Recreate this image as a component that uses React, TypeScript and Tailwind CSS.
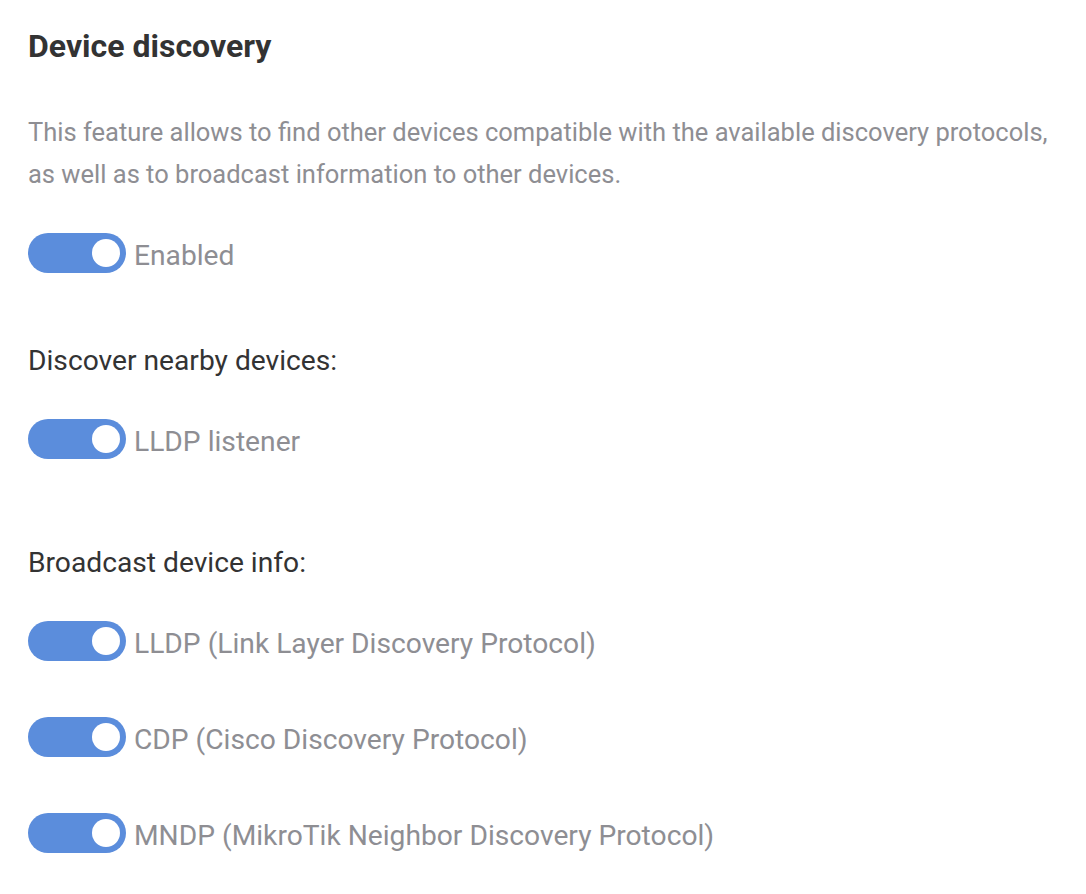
import React, { useState } from 'react';

// Toggle switch used for each discovery option
const Toggle = ({ on, onChange }: { on: boolean; onChange: () => void }) => (
  <button
    type="button"
    onClick={onChange}
    className={`relative flex h-[40px] w-[98px] shrink-0 items-center rounded-full px-[6px] ${
      on ? 'justify-end bg-[#5b8ddc]' : 'justify-start bg-[#c7c7cc]'
    }`}
  >
    <span className="block h-[28px] w-[28px] rounded-full bg-white" />
  </button>
);

const ToggleRow = ({ label, on, onChange }: { label: string; on: boolean; onChange: () => void }) => (
  <div className="flex h-[40px] items-start gap-[8px]">
    <Toggle on={on} onChange={onChange} />
    <span className="h-[40px] text-[28.2px] leading-[46px] text-[#8e8e93]">{label}</span>
  </div>
);

export default function App() {
  const [state, setState] = useState({
    enabled: true,
    listener: true,
    lldp: true,
    cdp: true,
    mndp: true,
  });
  const flip = (k: keyof typeof state) => () => setState((s) => ({ ...s, [k]: !s[k] }));

  return (
    <div className="min-h-screen bg-white px-[28px] pt-[26px] font-['Roboto',sans-serif]">
      <h1 className="text-[32px] font-bold leading-[40px] text-[#333333]">Device discovery</h1>

      <p className="mt-[45px] text-[25.5px] leading-[42px] text-[#8e8e93]">
        This feature allows to find other devices compatible with the available discovery protocols, as well as to
        broadcast information to other devices.
      </p>

      <div className="mt-[38px]">
        <ToggleRow label="Enabled" on={state.enabled} onChange={flip('enabled')} />
      </div>

      <h2 className="mt-[68px] text-[28.2px] leading-[40px] text-[#333333]">Discover nearby devices:</h2>
      <div className="mt-[38px]">
        <ToggleRow label="LLDP listener" on={state.listener} onChange={flip('listener')} />
      </div>

      <h2 className="mt-[84px] text-[28.2px] leading-[40px] text-[#333333]">Broadcast device info:</h2>
      <div className="mt-[38px] flex flex-col gap-[56px]">
        <ToggleRow label="LLDP (Link Layer Discovery Protocol)" on={state.lldp} onChange={flip('lldp')} />
        <ToggleRow label="CDP (Cisco Discovery Protocol)" on={state.cdp} onChange={flip('cdp')} />
        <ToggleRow label="MNDP (MikroTik Neighbor Discovery Protocol)" on={state.mndp} onChange={flip('mndp')} />
      </div>
    </div>
  );
}
